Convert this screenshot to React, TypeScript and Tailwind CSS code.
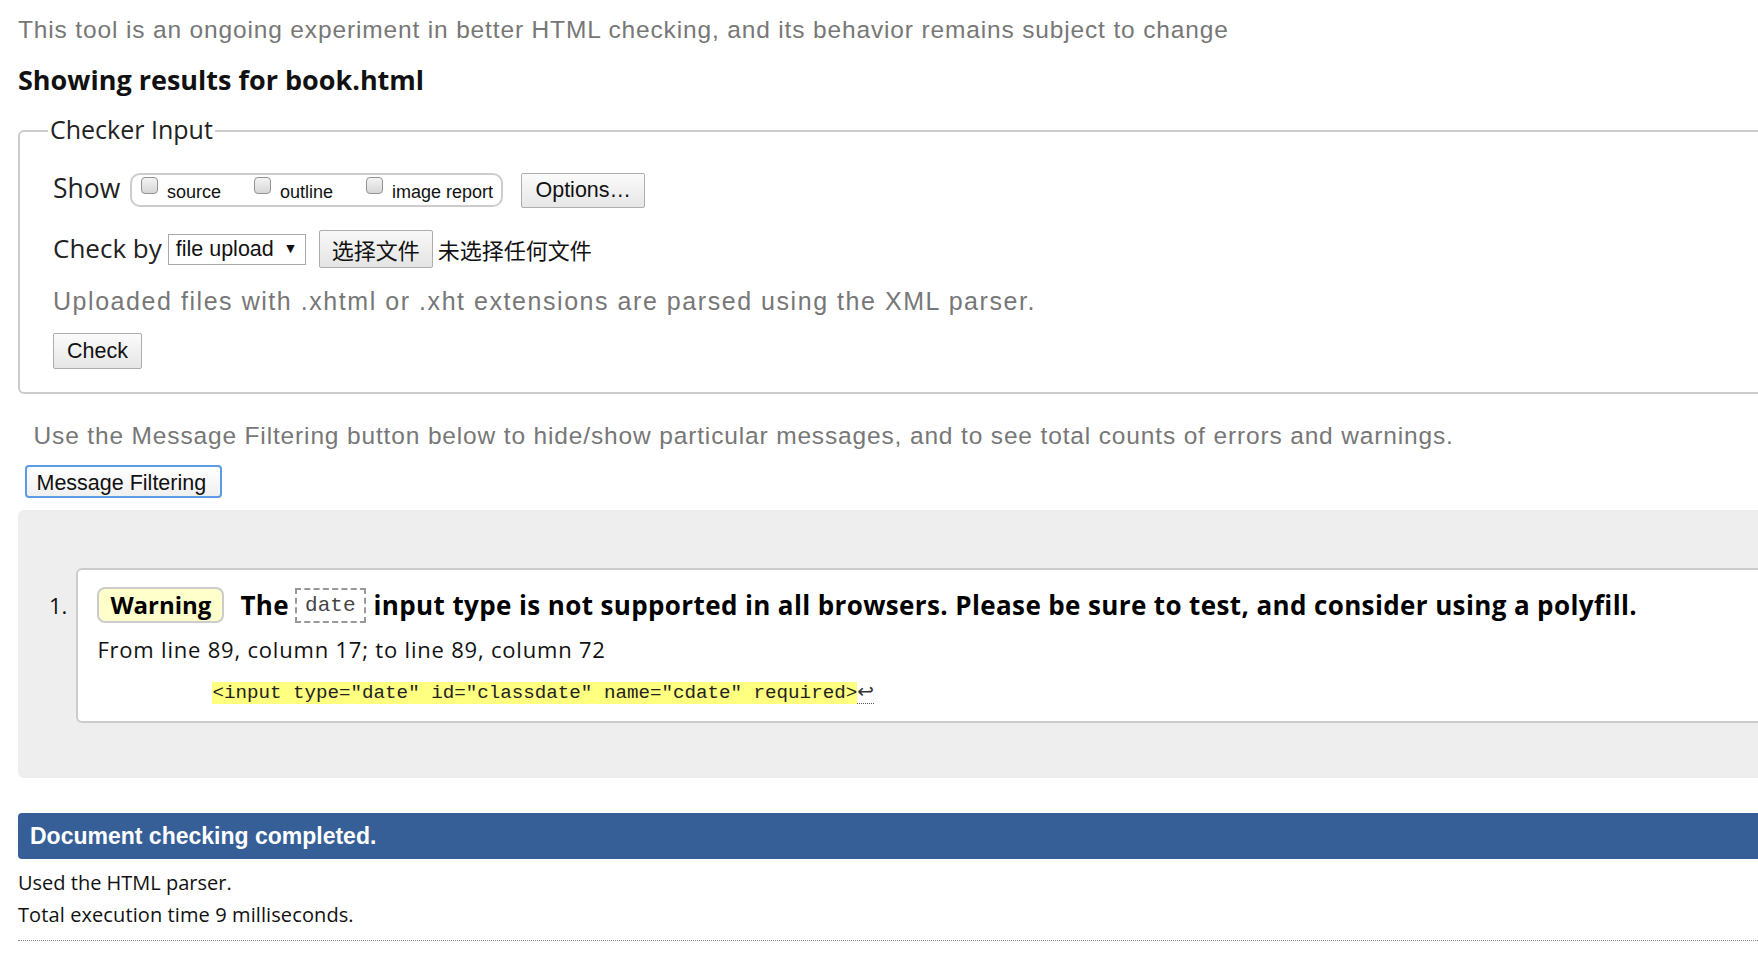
import React from 'react'

// validator-style results page, reproduced as plain flow layout

const sans = "font-['Open_Sans','Noto_Sans',sans-serif]"

function Checkbox() {
  return (
    <span className="block w-[17px] h-[17px] shrink-0 rounded-[4px] border border-[#939393] bg-gradient-to-b from-[#f4f4f4] to-[#d6d6d6]" />
  )
}

function ShowOption({ label, first }: { label: string; first?: boolean }) {
  return (
    <div className={first ? 'flex items-start' : 'flex items-start ml-[33px]'}>
      <Checkbox />
      <span className="ml-[9px] mt-[5px] leading-[20px] text-[18px] text-[#111] font-['Liberation_Sans',Arial,sans-serif]">
        {label}
      </span>
    </div>
  )
}

export default function App() {
  return (
    <div className="w-full h-screen overflow-hidden bg-white">
      <div className="w-[1900px] pl-[18px]">
        <p className="mt-[16px] leading-[28px] text-[24.5px] tracking-[0.85px] text-[#777] font-['Liberation_Sans',Arial,sans-serif] whitespace-nowrap">
          This tool is an ongoing experiment in better HTML checking, and its behavior remains subject to change
        </p>

        <h2 className={`mt-[18px] leading-[36px] text-[27px] font-bold text-[#111] ${sans}`}>
          Showing results for book.html
        </h2>

        {/* Checker Input */}
        <fieldset className="mt-[18px] border-2 border-[#ccc] rounded-[6px] pl-[33px] pb-[23px]">
          <legend className={`-ml-[5px] px-[2px] leading-[30px] text-[25px] text-[#222] ${sans}`}>
            <span className="relative -top-[2px]">Checker Input</span>
          </legend>

          <div className="mt-[25px] h-[38px] flex items-center">
            <span className={`mb-[4px] text-[26.5px] leading-[34px] text-[#222] ${sans}`}>Show</span>
            <div className="ml-[10px] w-[373px] h-[34px] border-2 border-[#ccc] rounded-[10px] flex items-start pl-[8.7px] pt-[2.3px]">
              <ShowOption label="source" first />
              <ShowOption label="outline" />
              <ShowOption label="image report" />
            </div>
            <button className="ml-[18px] w-[124px] h-[35px] border border-[#adadad] rounded-[2px] bg-gradient-to-b from-[#fbfbfb] to-[#e6e6e6] text-[21.5px] text-[#111] font-['Liberation_Sans',Arial,sans-serif]">
              Options…
            </button>
          </div>

          <div className="mt-[21px] h-[38px] flex items-center">
            <span className={`mb-[2px] text-[26px] leading-[34px] text-[#222] ${sans}`}>Check by</span>
            <div className="ml-[6px] w-[138px] h-[31px] border border-[#a9a9a9] bg-white flex items-center justify-between pl-[7px] pr-[10px]">
              <span className="text-[21.5px] leading-[26px] text-[#111] font-['Liberation_Sans',Arial,sans-serif]">file upload</span>
              <span className="text-[11px] text-[#111] font-['DejaVu_Sans',sans-serif]">▼</span>
            </div>
            <button className="ml-[13px] w-[114px] h-[38px] border border-[#adadad] rounded-[2px] bg-gradient-to-b from-[#f8f8f8] to-[#e4e4e4] text-[22px] text-[#111] font-['Noto_Sans_CJK_SC',sans-serif]">
              选择文件
            </button>
            <span className="ml-[5px] text-[22px] text-[#111] font-['Noto_Sans_CJK_SC',sans-serif]">未选择任何文件</span>
          </div>

          <p className="mt-[17.7px] leading-[30px] text-[25px] tracking-[1.55px] text-[#777] font-['Liberation_Sans',Arial,sans-serif] whitespace-nowrap">
            Uploaded files with .xhtml or .xht extensions are parsed using the XML parser.
          </p>

          <button className="mt-[17.6px] w-[89px] h-[36px] border border-[#adadad] rounded-[2px] bg-gradient-to-b from-[#fbfbfb] to-[#e6e6e6] text-[21.5px] text-[#111] font-['Liberation_Sans',Arial,sans-serif]">
            Check
          </button>
        </fieldset>

        <p className="ml-[15.5px] mt-[27px] leading-[30px] text-[24.5px] tracking-[0.85px] text-[#777] font-['Liberation_Sans',Arial,sans-serif] whitespace-nowrap">
          Use the Message Filtering button below to hide/show particular messages, and to see total counts of errors and warnings.
        </p>

        <button className="ml-[6.5px] mt-[14px] w-[197px] h-[33px] border-2 border-[#5d9be3] rounded-[4px] bg-gradient-to-b from-white to-[#f0f0f0] text-left pl-[10px] text-[21.5px] text-[#111] font-['Liberation_Sans',Arial,sans-serif]">
          Message Filtering
        </button>

        {/* results */}
        <div className="mt-[12px] rounded-[6px] bg-[#eee] pt-[58px] pb-[55px] flex">
          <div className={`w-[58.4px] shrink-0 pr-[9px] mt-[19px] text-right leading-[36px] text-[22px] text-[#111] ${sans}`}>
            1.
          </div>
          <div className="flex-1 border-2 border-[#ccc] rounded-[6px] bg-white pl-[19px] pt-[17px] pb-[17px]">
            <div className={`h-[36px] flex items-center whitespace-nowrap text-[26px] tracking-[0.38px] font-bold text-[#000] ${sans}`}>
              <span className="h-[36px] flex items-center px-[11px] border-2 border-[#ccc] rounded-[8px] bg-[#ffffcc] text-[24px] tracking-normal">
                Warning
              </span>
              <span className="ml-[16px]">The</span>
              <span className="ml-[6px] h-[35px] flex items-center px-[8px] border-2 border-dashed border-[#999] font-normal text-[21px] tracking-normal text-[#444] font-['Liberation_Mono',monospace]">
                date
              </span>
              <span className="ml-[8px]">
                input type is not supported in all browsers. Please be sure to test, and consider using a polyfill.
              </span>
            </div>
            <p className={`mt-[10.5px] leading-[30px] text-[22px] tracking-[0.8px] text-[#111] ${sans}`}>
              From line 89, column 17; to line 89, column 72
            </p>
            <div className="mt-[16.5px] ml-[115px] leading-[22px] whitespace-nowrap text-[19.2px] text-[#222] font-['Liberation_Mono',monospace]">
              <span className="bg-[#ffff80]">&lt;input type=&quot;date&quot; id=&quot;classdate&quot; name=&quot;cdate&quot; required&gt;</span>
              <span className="border-b border-dotted border-[#555] font-['DejaVu_Sans',sans-serif] text-[20px] text-[#333]">↩</span>
            </div>
          </div>
        </div>

        <div className="mt-[35px] h-[46px] rounded-l-[4px] bg-[#375f97] flex items-center pl-[12px]">
          <span className="text-[23px] font-bold text-white font-['Liberation_Sans',Arial,sans-serif]">
            Document checking completed.
          </span>
        </div>

        <div className={`mt-[8px] text-[20px] leading-[32px] text-[#111] ${sans}`}>
          <p>Used the HTML parser.</p>
          <p className="tracking-[0.1px]">Total execution time 9 milliseconds.</p>
        </div>

        <div className="mt-[9px] border-t border-dotted border-[#888]" />
      </div>
    </div>
  )
}
